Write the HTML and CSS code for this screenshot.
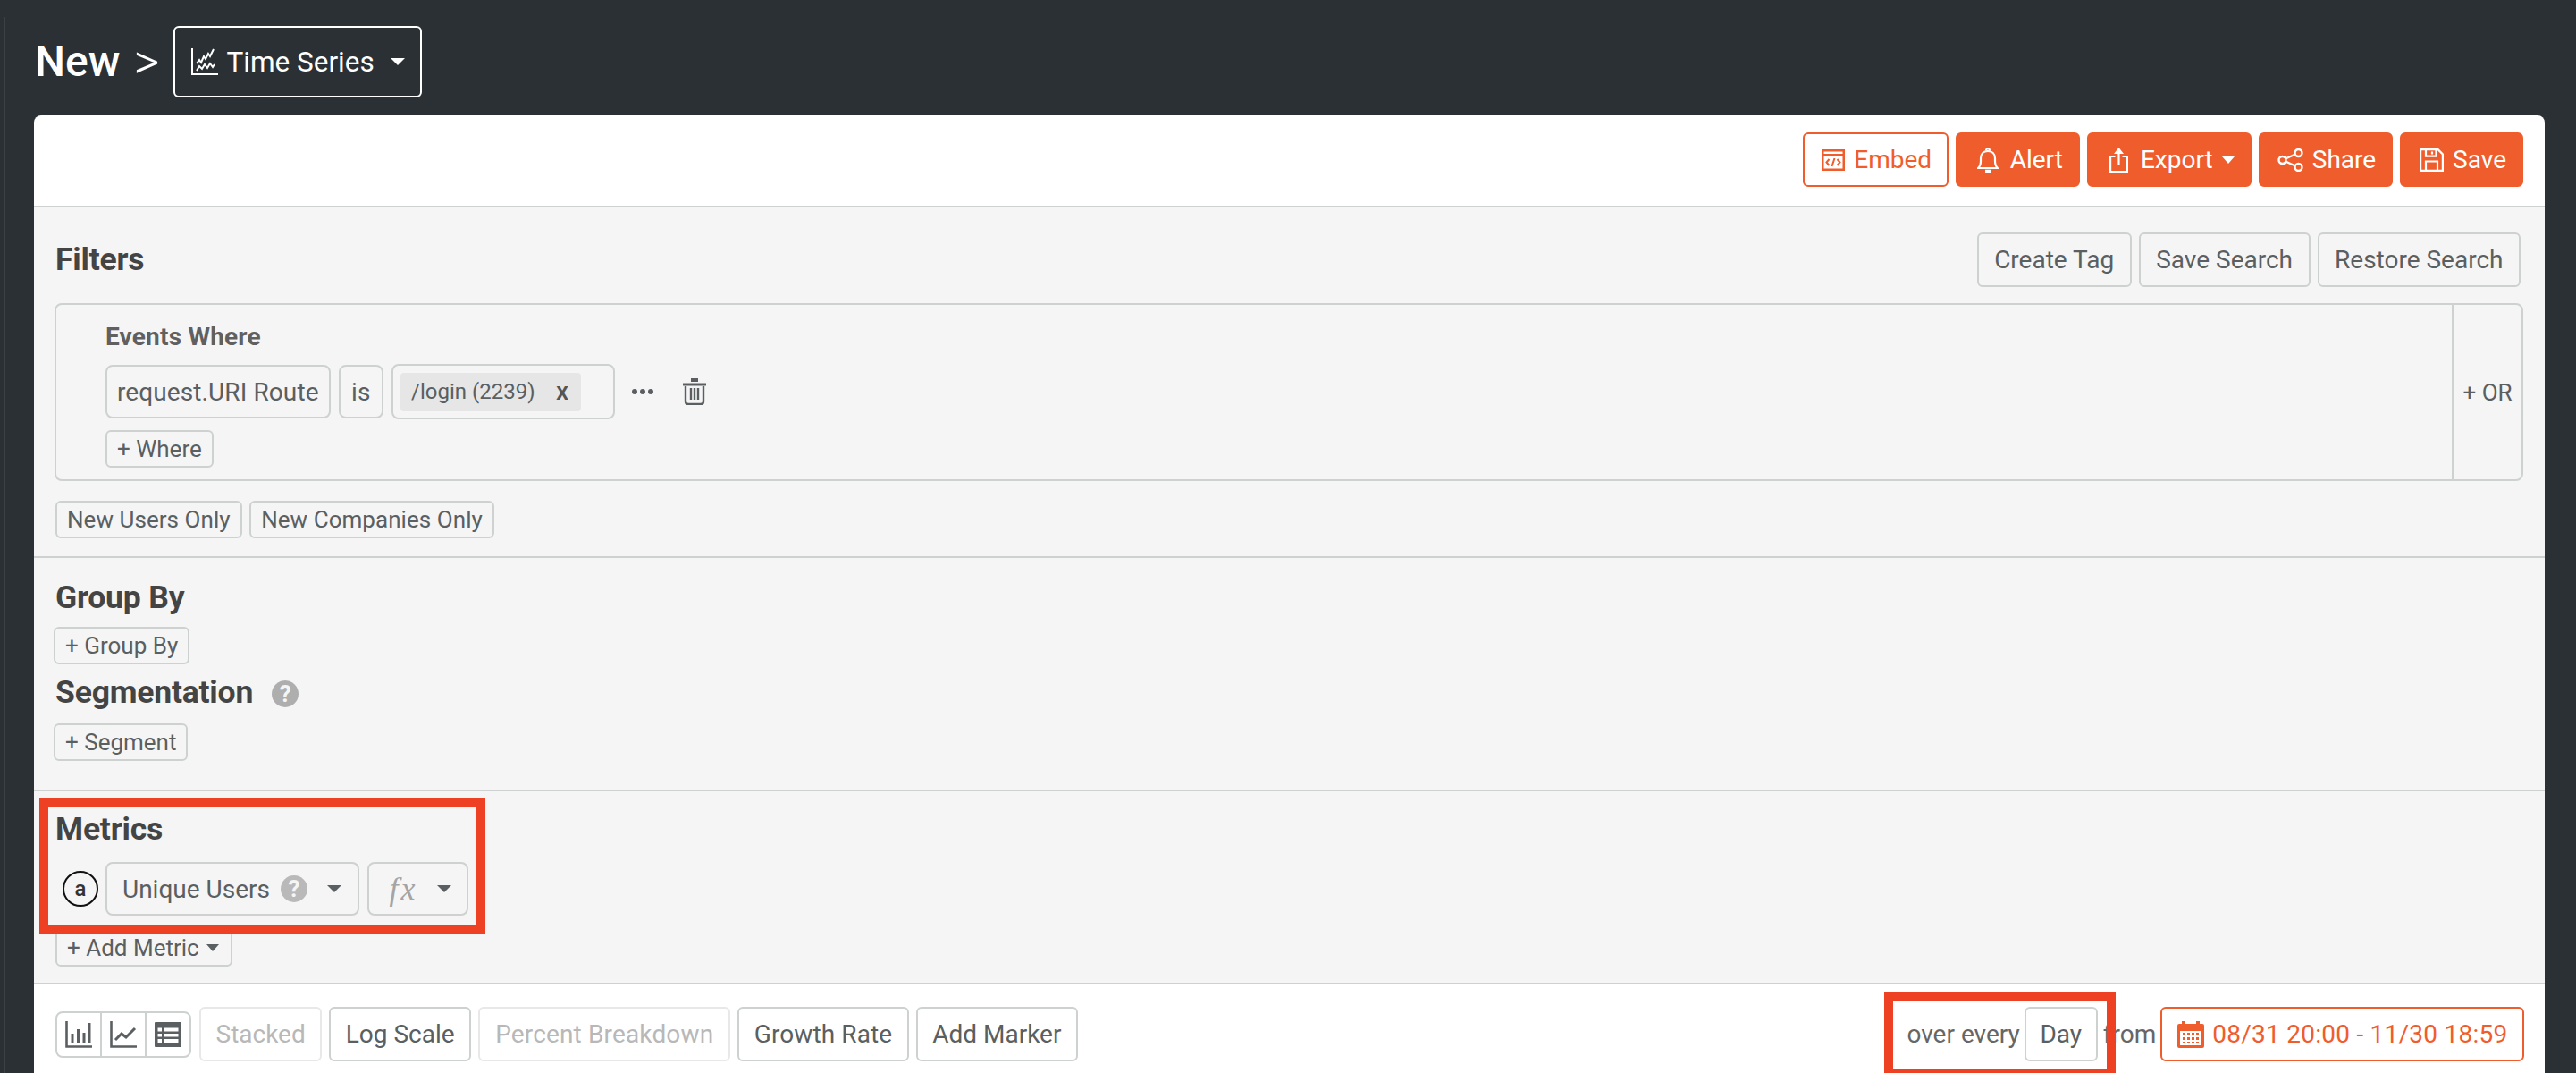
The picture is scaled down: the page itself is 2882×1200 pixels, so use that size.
FILE: index.html
```html
<!DOCTYPE html>
<html lang="en">
<head>
<meta charset="utf-8">
<title>New Time Series</title>
<link rel="stylesheet" href="styles.css">
</head>
<body>
<div class="rail"></div>
<div class="page">
  <header class="title-row">
    <span class="title">New</span>
    <span class="title-sep">&gt;</span>
    <button class="type-btn">
      <svg class="ic-ts" viewBox="0 0 30 30" fill="none" stroke="#fff"><path d="M1 0V29H30" stroke-width="2"/><path d="M6 17l3-4 2 3 3-7 2 3 3-6 2 3 4-8M6 25l3-5 3 3 3-5 3 4 3-5 3 4 2-3" stroke-width="2"/></svg>
      <span>Time Series</span>
      <i class="caret caret-white"></i>
    </button>
  </header>

  <main class="card">
    <div class="toolbar">
      <button class="btn-o outline">
        <svg class="ic ic-embed" viewBox="0 0 26 24"><path fill="#f05d2c" d="M0 0h26v24H0zM2.500 7v14.500h21V7zM2.500 2.500V5h21V2.500z"/><path fill="none" stroke="#f05d2c" stroke-width="2" d="M8.500 11l-3 3.500 3 3.500M17.500 11l3 3.500-3 3.500M14.500 10l-3 9"/></svg>
        Embed
      </button>
      <button class="btn-o">
        <svg class="ic ic-bell" viewBox="0 0 24 30" fill="none" stroke="#fff" stroke-width="2.200"><path d="M1 24c2.500-2 3-4 3-8v-3c0-5 3.500-8 8-8s8 3 8 8v3c0 4 .5 6 3 8z"/><path d="M10 4.500c0-3 4-3 4 0" /><path d="M9 27.500h6" stroke-width="3.500"/></svg>
        Alert
      </button>
      <button class="btn-o">
        <svg class="ic ic-export" viewBox="0 0 21 28" fill="none" stroke="#fff" stroke-width="2.200"><path d="M6.500 10H1.100v17h18.800V10h-5.400"/><path d="M10.500 19V4"/><path fill="#fff" stroke="none" d="M10.500 0l5.500 7H5z"/></svg>
        Export
        <i class="caret caret-white caret-sm"></i>
      </button>
      <button class="btn-o">
        <svg class="ic ic-share" viewBox="0 0 29 26" fill="none" stroke="#fff" stroke-width="2.400"><circle cx="5.500" cy="13" r="4"/><circle cx="23.500" cy="5" r="4"/><circle cx="23.500" cy="21" r="4"/><path d="M9 11.500l11-5M9 14.500l11 5"/></svg>
        Share
      </button>
      <button class="btn-o">
        <svg class="ic ic-save" viewBox="0 0 27 26" fill="none" stroke="#fff" stroke-width="2.200"><path d="M1.100 1.100h19.500l5.300 5.300v18.500H1.100z"/><path d="M7 1.100v7.500h11.500V1.100M14 3.500v3M7 24.900V14.500h13v10.400"/></svg>
        Save
      </button>
    </div>

    <section class="panel panel-filters">
      <div class="filters-head">
        <h2 class="heading">Filters</h2>
        <div class="btn-row">
          <button class="btn">Create Tag</button>
          <button class="btn">Save Search</button>
          <button class="btn">Restore Search</button>
        </div>
      </div>
      <div class="filter-box">
        <div class="filter-main">
          <div class="events-label">Events Where</div>
          <div class="filter-line">
            <span class="field">request.URI Route</span>
            <span class="field field-is">is</span>
            <span class="field-multi">
              <span class="chip">/login (2239)<b class="chip-x">x</b></span>
            </span>
            <span class="dots"><i></i><i></i><i></i></span>
            <svg class="ic-trash" viewBox="0 0 28 30" fill="none" stroke="#5a5f62"><path d="M1 7h26" stroke-width="3"/><path d="M10 2h8" stroke-width="4"/><path d="M4 9v17c0 2 1 3 3 3h14c2 0 3-1 3-3V9M10 11v13M14 11v13M18 11v13" stroke-width="2.400"/></svg>
          </div>
          <button class="btn-s">+ Where</button>
        </div>
        <div class="or-cell">+ OR</div>
      </div>
      <div class="only-row">
        <button class="btn-s">New Users Only</button>
        <button class="btn-s">New Companies Only</button>
      </div>
    </section>

    <section class="panel panel-group">
      <h2 class="heading">Group By</h2>
      <button class="btn-s btn-group">+ Group By</button>
      <h2 class="heading heading-seg">Segmentation <span class="help help-lg">?</span></h2>
      <button class="btn-s btn-seg">+ Segment</button>
    </section>

    <section class="panel panel-metrics">
      <h2 class="heading">Metrics</h2>
      <div class="metric-line">
        <span class="badge">a</span>
        <span class="select select-metric">Unique Users <span class="help help-sm">?</span><i class="caret caret-grey"></i></span>
        <span class="select select-fx"><em class="fx">fx</em><i class="caret caret-grey"></i></span>
      </div>
      <button class="btn-s btn-add">+ Add Metric <i class="caret caret-grey caret-sm"></i></button>
    </section>

    <footer class="bottom">
      <div class="bottom-left">
        <div class="chart-group">
          <span class="chart-cell"><svg class="ic-chart" viewBox="0 0 30 30" fill="none" stroke="#5a5f62" stroke-width="2.600"><path d="M1.500 0v28.500H30"/><path d="M8 25V14M14.500 25V9M21 25V13M27 25V2" stroke-width="3"/></svg></span>
          <span class="chart-cell"><svg class="ic-chart" viewBox="0 0 30 30" fill="none" stroke="#5a5f62" stroke-width="2.600"><path d="M1.500 0v28.500H30"/><path d="M6 21l7-7 5 4 10-10" stroke-width="3"/></svg></span>
          <span class="chart-cell"><svg class="ic-chart" viewBox="0 0 30 28"><path fill="#5a5f62" d="M1 0h28a1 1 0 0 1 1 1v26a1 1 0 0 1-1 1H1a1 1 0 0 1-1-1V1a1 1 0 0 1 1-1zm2.500 6.500v4H8v-4zm7 0v4h16v-4zm-7 6.500v3.500H8V13zm7 0v3.500h16V13zm-7 6v4H8v-4zm7 0v4h16v-4z"/></svg></span>
        </div>
        <button class="btn btn-off">Stacked</button>
        <button class="btn">Log Scale</button>
        <button class="btn btn-off btn-wide">Percent Breakdown</button>
        <button class="btn btn-spaced">Growth Rate</button>
        <button class="btn">Add Marker</button>
      </div>
      <div class="bottom-right">
        <span class="plain">over every</span>
        <button class="btn btn-day">Day</button>
        <span class="plain plain-from">from</span>
        <button class="btn-date">
          <svg class="ic-cal" viewBox="0 0 30 30"><path fill="#f05d2c" d="M5 0h4v3h12V0h4v3h3a2 2 0 0 1 2 2v23a2 2 0 0 1-2 2H2a2 2 0 0 1-2-2V5a2 2 0 0 1 2-2h3zM3 11v16h24V11z"/><path fill="#f05d2c" d="M6 13h3v3H6zM11 13h3v3h-3zM16 13h3v3h-3zM21 13h3v3h-3zM6 18h3v3H6zM11 18h3v3h-3zM16 18h3v3h-3zM21 18h3v3h-3zM6 23h3v2H6zM11 23h3v2h-3zM16 23h3v2h-3zM21 23h3v2h-3z"/></svg>
          08/31 20:00 - 11/30 18:59
        </button>
      </div>
    </footer>
  </main>
</div>
<div class="mark mark-metrics"></div>
<div class="mark mark-day"></div>
</body>
</html>
```

FILE: styles.css
```css
* { box-sizing: border-box; }
html, body { margin: 0; height: 1200px; overflow: hidden; }
body { background: #2b3035; font-family: Roboto, "Liberation Sans", sans-serif; color: #5a5f62; position: relative; }
button { font-family: inherit; margin: 0; cursor: pointer; white-space: nowrap; }
h2 { margin: 0; }

.rail { position: absolute; left: 4px; top: 19px; bottom: 0; width: 2px; background: #3a4045; }
.page { padding: 29px 35px 0 38px; }

.title-row { display: flex; align-items: center; height: 80px; margin-bottom: 20px; color: #fff; }
.title { font-size: 48px; font-weight: 500; margin-left: 1px; line-height: 60px; }
.title-sep { font-size: 56px; font-weight: 300; line-height: 60px; margin-left: 15px; margin-right: 16px; }
.type-btn { display: flex; align-items: center; width: 278px; height: 80px; padding: 0 0 0 18px; background: none; border: 2px solid #fff; border-radius: 6px; color: #fff; font-size: 31.500px; }
.ic-ts { width: 30px; height: 30px; margin-right: 9px; }
.type-btn .caret { margin-left: 18px; }

.caret { display: inline-block; width: 0; height: 0; border-left: 8px solid transparent; border-right: 8px solid transparent; border-top: 8px solid #5a5f62; }
.caret-white { border-top-color: #fff; }
.caret-grey { border-top-color: #5a5f62; }
.caret-sm { border-left-width: 7px; border-right-width: 7px; border-top-width: 8px; }

.card { background: #fff; border-radius: 8px 8px 0 0; height: 1071px; overflow: hidden; }
.toolbar { display: flex; justify-content: flex-end; align-items: center; gap: 8px; height: 103px; padding: 0 24px 2px 0; border-bottom: 2px solid #cdd1d0; }
.btn-o { display: flex; align-items: center; height: 61px; padding: 0 17px 0 0; background: #f05d2c; border: 2px solid #f05d2c; border-radius: 6px; color: #fff; font-size: 28px; }
.btn-o.outline { background: #fff; color: #f05d2c; }
.ic { flex: none; }
.ic-embed { width: 26px; height: 24px; margin: 0 10px 0 19px; }
.ic-bell { width: 24px; height: 30px; margin: 0 13px 0 21.500px; }
.ic-export { width: 21px; height: 28px; margin: 0 14px 0 23px; }
.ic-share { width: 29px; height: 26px; margin: 0 10px 0 19px; }
.ic-save { width: 27px; height: 26px; margin: 0 10px 0 20px; }
.btn-o .caret-sm { margin-left: 10px; }

.panel { background: #f5f5f5; border-bottom: 2px solid #cdd1d0; padding-left: 24px; }
.panel-filters { height: 392px; padding: 28px 24px 0 23px; }
.panel-group { height: 261px; padding-top: 24px; }
.panel-metrics { height: 216px; padding-top: 22px; }

.heading { font-size: 35.500px; font-weight: 700; line-height: 40px; color: #444; letter-spacing: -.2px; }
.filters-head { display: flex; justify-content: space-between; align-items: center; height: 61px; margin-bottom: 18px; padding-right: 3px; }
.filters-head .heading { margin: -2px 0 0 1px; }
.btn-row { display: flex; gap: 8px; }

.btn { height: 61px; padding: 0 17.500px; background: #f5f5f5; border: 2px solid #cdd1d0; border-radius: 6px; color: #5a5f62; font-size: 28px; }
.btn-s { display: inline-flex; align-items: center; height: 42px; padding: 0 11px; background: #f5f5f5; border: 2px solid #cdd1d0; border-radius: 6px; color: #5a5f62; font-size: 26px; }

.filter-box { display: flex; height: 199px; border: 2px solid #cdd1d0; border-radius: 8px; }
.filter-main { flex: 1; padding: 19px 0 0 55px; }
.events-label { font-size: 28px; font-weight: 700; line-height: 34px; color: #606060; letter-spacing: .2px; margin-bottom: 13px; }
.filter-line { display: flex; align-items: center; height: 62px; margin-bottom: 12px; }
.field { display: flex; align-items: center; height: 60px; padding: 0 11px; border: 2px solid #cdd1d0; border-radius: 8px; font-size: 28px; letter-spacing: .1px; margin-right: 9px; }
.field-is { padding: 0 12.500px; }
.field-multi { display: flex; align-items: center; width: 250px; height: 62px; padding: 0 8px; border: 2px solid #cdd1d0; border-radius: 8px; }
.chip { display: flex; align-items: center; justify-content: space-between; width: 202px; height: 43px; padding: 0 14px 0 12px; background: #e6e6e6; border-radius: 4px; font-size: 24px; }
.chip-x { font-size: 28px; font-weight: 500; color: #555; line-height: 30px; }
.dots { display: flex; gap: 3px; margin-left: 19px; }
.dots i { width: 6px; height: 6px; border-radius: 50%; background: #5a5f62; }
.ic-trash { width: 28px; height: 30px; margin-left: 32px; }
.or-cell { display: flex; align-items: center; justify-content: center; width: 78px; border-left: 2px solid #cdd1d0; font-size: 26px; }
.only-row { display: flex; gap: 8.500px; margin-top: 22px; margin-left: 1px; }
.only-row .btn-s { letter-spacing: .05px; }

.btn-group { display: flex; margin-top: 13px; margin-left: -2px; }
.heading-seg { display: flex; align-items: center; margin-top: 11px; }
.btn-seg { display: flex; margin-top: 15px; margin-left: -2px; }
.help { display: inline-flex; align-items: center; justify-content: center; border-radius: 50%; background: #aeaeae; color: #f5f5f5; font-weight: 700; letter-spacing: 0; }
.help-lg { width: 30px; height: 30px; font-size: 26px; margin: 4px 0 0 21px; }
.help-sm { width: 30px; height: 30px; font-size: 26px; margin-left: 12px; background: #b9b9b9; }

.metric-line { display: flex; align-items: center; height: 60px; margin-top: 17px; margin-left: 8px; }
.badge { display: flex; align-items: center; justify-content: center; width: 40px; height: 40px; border: 2px solid #111; border-radius: 50%; color: #333; font-size: 24px; font-weight: 500; margin-right: 8px; }
.select { display: flex; align-items: center; height: 60px; border: 2px solid #cdd1d0; border-radius: 8px; font-size: 28px; }
.select-metric { width: 284px; padding-left: 17px; }
.select-metric .caret { margin-left: auto; margin-right: 18px; }
.select-fx { width: 113px; margin-left: 8.500px; padding-left: 23px; }
.select-fx .caret { margin-left: auto; margin-right: 17px; }
.fx { font-family: "Liberation Serif", serif; font-size: 36px; color: #a4a4a4; line-height: 40px; letter-spacing: 3px; }
.btn-add { display: flex; width: 198px; margin-top: 15px; white-space: nowrap; }
.btn-add .caret { margin-left: 8px; }

.bottom { display: flex; justify-content: space-between; align-items: flex-start; height: 100px; padding: 25px 23px 0 24px; background: #fff; }
.bottom-left, .bottom-right { display: flex; align-items: center; gap: 8px; }
.chart-group { display: flex; height: 52px; width: 152px; border: 2px solid #cdd1d0; border-radius: 8px; margin-right: 1px; }
.chart-cell { flex: 1; display: flex; align-items: center; justify-content: center; border-left: 2px solid #cdd1d0; }
.chart-cell:first-child { border-left: 0; }
.ic-chart { width: 30px; height: 30px; }
.bottom .btn { background: #fff; padding: 0 16.500px; }
.bottom .btn-off { border-color: #e8e8e8; color: #b8b8b8; }
.bottom .btn-wide { padding: 0 17px; letter-spacing: .15px; }
.bottom .btn-spaced { letter-spacing: .1px; }
.plain { font-size: 28px; color: #666; }
.plain-from { margin-left: 1px; }
.bottom-right { gap: 5px; }
.bottom .btn-day { width: 82px; padding: 0; }
.btn-date { display: flex; align-items: center; gap: 9px; height: 61px; padding: 0 16.500px 0 17px; background: #fff; border: 2px solid #f05d2c; border-radius: 6px; color: #f05d2c; font-size: 28px; letter-spacing: .25px; }
.ic-cal { width: 30px; height: 30px; }

.mark { position: absolute; border: 10px solid #ee4023; pointer-events: none; }
.mark-metrics { left: 44px; top: 893px; width: 499px; height: 151px; }
.mark-day { left: 2108px; top: 1109px; width: 259px; height: 96px; }
```
